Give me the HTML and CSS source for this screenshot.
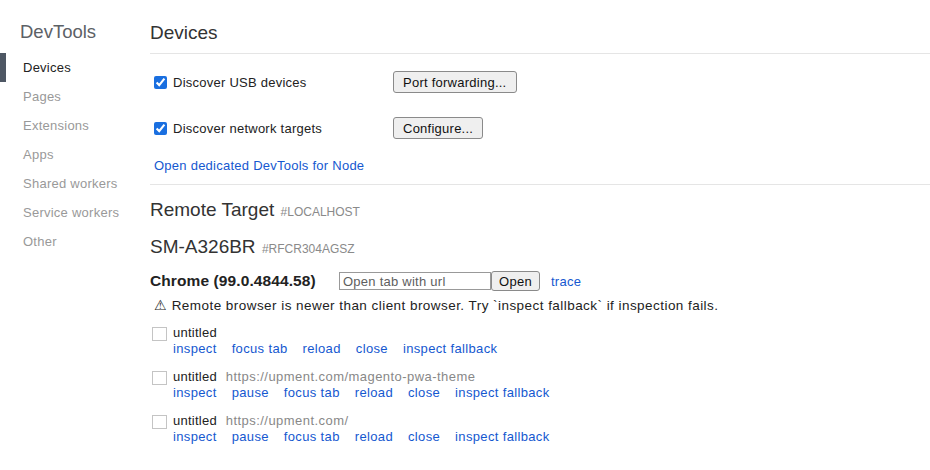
FILE: index.html
```html
<!DOCTYPE html>
<html lang="en">
<head>
<meta charset="utf-8">
<title>Inspect with Chrome Developer Tools</title>
<link rel="stylesheet" href="styles.css">
</head>
<body>
  <nav class="sidebar">
    <div class="caption">DevTools</div>
    <div class="nav-item selected">Devices</div>
    <div class="nav-item">Pages</div>
    <div class="nav-item">Extensions</div>
    <div class="nav-item">Apps</div>
    <div class="nav-item">Shared workers</div>
    <div class="nav-item">Service workers</div>
    <div class="nav-item">Other</div>
  </nav>
  <main class="content">
    <header class="page-header">Devices</header>
    <div class="options">
      <div class="option-row">
        <label class="option-label"><input type="checkbox" class="check" checked>Discover USB devices</label>
        <button class="btn">Port forwarding...</button>
      </div>
      <div class="option-row">
        <label class="option-label"><input type="checkbox" class="check" checked>Discover network targets</label>
        <button class="btn">Configure...</button>
      </div>
      <a class="link node-link" href="#">Open dedicated DevTools for Node</a>
    </div>
    <section class="targets">
      <h2 class="device-title">Remote Target <span class="tag">#LOCALHOST</span></h2>
      <h2 class="device-title device">SM-A326BR <span class="tag">#RFCR304AGSZ</span></h2>
      <div class="browser-row">
        <span class="browser-name">Chrome (99.0.4844.58)</span>
        <input class="url-input" type="text" placeholder="Open tab with url">
        <button class="btn btn-small">Open</button>
        <a class="link trace" href="#">trace</a>
      </div>
      <div class="warning">⚠ Remote browser is newer than client browser. Try `inspect fallback` if inspection fails.</div>
      <div class="page-row">
        <div class="thumb"></div>
        <div class="page-info">
          <div class="page-title">untitled</div>
          <div class="actions">
            <a class="link action" href="#">inspect</a>
            <a class="link action" href="#">focus tab</a>
            <a class="link action" href="#">reload</a>
            <a class="link action" href="#">close</a>
            <a class="link action" href="#">inspect fallback</a>
          </div>
        </div>
      </div>
      <div class="page-row">
        <div class="thumb"></div>
        <div class="page-info">
          <div class="page-title">untitled <span class="page-url">https://upment.com/magento-pwa-theme</span></div>
          <div class="actions">
            <a class="link action" href="#">inspect</a>
            <a class="link action" href="#">pause</a>
            <a class="link action" href="#">focus tab</a>
            <a class="link action" href="#">reload</a>
            <a class="link action" href="#">close</a>
            <a class="link action" href="#">inspect fallback</a>
          </div>
        </div>
      </div>
      <div class="page-row">
        <div class="thumb"></div>
        <div class="page-info">
          <div class="page-title">untitled <span class="page-url">https://upment.com/</span></div>
          <div class="actions">
            <a class="link action" href="#">inspect</a>
            <a class="link action" href="#">pause</a>
            <a class="link action" href="#">focus tab</a>
            <a class="link action" href="#">reload</a>
            <a class="link action" href="#">close</a>
            <a class="link action" href="#">inspect fallback</a>
          </div>
        </div>
      </div>
    </section>
  </main>
</body>
</html>
```

FILE: styles.css
```css
html, body {
  background: #fff;
}
body {
  margin: 0;
  display: flex;
  font-family: "Liberation Sans", Arial, sans-serif;
  font-size: 13px;
  letter-spacing: 0.25px;
  color: #222;
  overflow: hidden;
}

.sidebar {
  width: 150px;
  flex: none;
  padding-top: 20px;
}
.caption {
  font-size: 18.5px;
  line-height: 24px;
  letter-spacing: 0;
  color: #5c6166;
  padding-left: 20px;
  margin-bottom: 9px;
}
.nav-item {
  line-height: 29px;
  height: 29px;
  padding-left: 17px;
  border-left: 6px solid transparent;
  color: #999;
}
.nav-item.selected {
  border-left-color: #4e5764;
  color: #222;
}

.content {
  flex: 1;
  min-width: 0;
}
.page-header {
  font-size: 19px;
  line-height: 24px;
  letter-spacing: 0;
  color: #333;
  padding: 21px 0 8px;
  border-bottom: 1px solid #e5e5e5;
}

.options {
  padding-top: 17px;
  padding-bottom: 10px;
  border-bottom: 1px solid #e5e5e5;
}
.option-row {
  display: flex;
  align-items: center;
  height: 22px;
  margin-bottom: 24px;
}
.option-row + .option-row {
  margin-bottom: 19px;
}
.option-label {
  width: 243px;
  display: flex;
  align-items: center;
}
.check {
  width: 13px;
  height: 13px;
  margin: 0 6px 0 4px;
  accent-color: #1a6fe0;
}
.btn {
  font-family: inherit;
  font-size: 13px;
  letter-spacing: 0.25px;
  color: #111;
  background: #efefef;
  border: 1px solid #8a8a8a;
  border-radius: 3px;
  height: 22px;
  padding: 0 9px;
  margin: 0;
}
.link {
  color: #1558d0;
  text-decoration: none;
}
.node-link {
  display: block;
  line-height: 16px;
  padding-left: 4px;
}

.targets {
  padding-top: 13px;
}
.device-title {
  font-size: 19px;
  font-weight: normal;
  line-height: 24px;
  letter-spacing: 0;
  color: #333;
  margin: 0 0 11px;
}
.device-title.device {
  margin-bottom: 10px;
}
.tag {
  font-size: 12px;
  color: #8a8a8a;
  margin-left: 1px;
}
.browser-row {
  display: flex;
  align-items: center;
  height: 20px;
}
.browser-name {
  font-weight: bold;
  font-size: 15.5px;
  letter-spacing: 0.1px;
  width: 189px;
}
.url-input {
  box-sizing: border-box;
  width: 152px;
  height: 18px;
  margin: 0;
  padding: 0 3px;
  border: 1px solid #999;
  border-radius: 0;
  font-family: inherit;
  font-size: 13px;
  letter-spacing: 0.25px;
  color: #555;
}
.url-input::placeholder {
  color: #5e5e5e;
}
.btn-small {
  height: 20px;
  width: 49px;
  padding: 0;
}
.trace {
  margin-left: 11px;
}
.warning {
  font-size: 13.5px;
  letter-spacing: 0.45px;
  line-height: 16px;
  padding-left: 4px;
  margin-top: 7px;
}

.page-row {
  display: flex;
  align-items: flex-start;
  margin-top: 11px;
}
.page-row + .page-row {
  margin-top: 12px;
}
.thumb {
  box-sizing: border-box;
  width: 15px;
  height: 14px;
  border: 1px solid #c4c4c4;
  margin: 2px 6px 0 2px;
}
.page-info {
  line-height: 16px;
}
.page-url {
  color: #888;
  margin-left: 5px;
  letter-spacing: 0.45px;
}
.actions {
  display: flex;
  gap: 15px;
  letter-spacing: 0.35px;
}
```
